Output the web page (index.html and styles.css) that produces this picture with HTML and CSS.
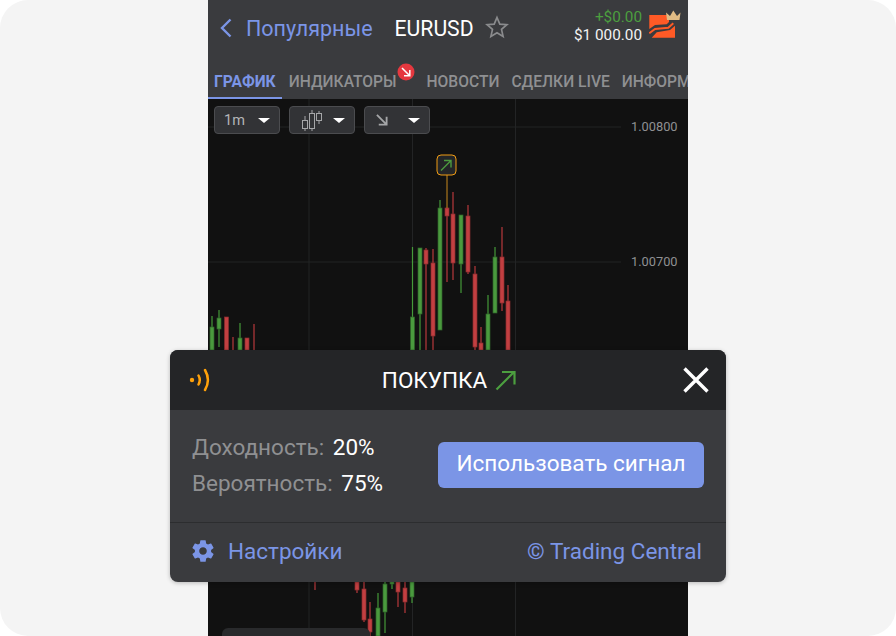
FILE: index.html
```html
<!DOCTYPE html>
<html lang="en">
<head>
    <meta charset="UTF-8">
    <title>EURUSD</title>
    <link rel="stylesheet" href="styles.css">
</head>
<body>
<div class="page">
    <div class="phone">
        <div class="topbar">
            <svg class="back" width="12" height="20" viewBox="0 0 12 20"><path d="M10.500 1.500 2 10l8.500 8.500" fill="none" stroke="#7b95e6" stroke-width="2.400"/></svg>
            <span class="back-text">Популярные</span>
            <span class="symbol">EURUSD</span>
            <svg class="star" width="24" height="24" viewBox="0 0 24 24"><path d="M12 2.500l2.800 6.600 7.100.6-5.400 4.700 1.600 7-6.100-3.700-6.100 3.700 1.600-7L2.100 9.700l7.100-.6z" fill="none" stroke="#8a8b8d" stroke-width="1.700"/></svg>
            <div class="balance">
                <div class="profit">+$0.00</div>
                <div class="amount">$1 000.00</div>
            </div>
            <svg class="logo" width="32" height="29" viewBox="0 0 32 29">
                <path d="M.3 5H20v7l-2.300 2.300L6 15 .3 19z" fill="#ff5a26"/>
                <path d="M.3 23.300 6 19l13.300-1.300 5-4.400" fill="none" stroke="#ff5a26" stroke-width="2"/>
                <path d="M2.700 27.700 7.700 22.300 21 20l5-4.300v12z" fill="#ff5a26"/>
                <path d="M18 10 17 2.500l4 3.500L24.300.5 28 6l3.500-3.500-1 7.500z" fill="#e0bb84"/>
            </svg>
        </div>
        <div class="tabs">
            <div class="tab tab-active">ГРАФИК</div>
            <div class="tab">ИНДИКАТОРЫ</div>
            <div class="tab tab-news">НОВОСТИ</div>
            <div class="tab">СДЕЛКИ LIVE</div>
            <div class="tab">ИНФОРМ</div>
            <svg class="badge" width="18" height="18" viewBox="0 0 18 18"><circle cx="9" cy="9" r="8.500" fill="#e5383f"/><path d="M5 5l7.500 7.500M7 12.800h5.800V7" fill="none" stroke="#fff" stroke-width="1.500"/></svg>
        </div>
        <div class="chart">
            <svg class="chart-svg" width="480" height="537" viewBox="208 99 480 537">
                <g class="grid">
                    <path d="M208 127H621M208 262H621M309 99V636M412.500 99V636M515.500 99V636"/>
                </g>
                <text class="price" x="631" y="131">1.00800</text>
                <text class="price" x="631" y="266">1.00700</text>
                <g class="up">
                    <line x1="212" y1="316" x2="212" y2="350"/><rect x="210" y="327" width="4" height="23"/>
                    <line x1="219" y1="310" x2="219" y2="347"/><rect x="217" y="318" width="4" height="11"/>
                    <line x1="240" y1="323" x2="240" y2="350"/><rect x="238" y="338" width="4" height="12"/>
                    <line x1="412.500" y1="247" x2="412.500" y2="350"/><rect x="410.500" y="317" width="4" height="33"/>
                    <line x1="420" y1="248" x2="420" y2="350"/><rect x="418" y="248" width="4" height="66"/>
                    <line x1="440" y1="200" x2="440" y2="330"/><rect x="438" y="208" width="4" height="122"/>
                    <line x1="461" y1="215" x2="461" y2="293"/><rect x="459" y="215" width="4" height="49"/>
                    <line x1="488" y1="295" x2="488" y2="350"/><rect x="486" y="314" width="4" height="36"/>
                    <line x1="495" y1="247" x2="495" y2="313"/><rect x="493" y="257" width="4" height="56"/>
                    <line x1="378" y1="593" x2="378" y2="636"/><rect x="376" y="608" width="4" height="28"/>
                    <line x1="385" y1="582" x2="385" y2="633"/><rect x="383" y="584" width="4" height="28"/>
                    <line x1="392" y1="582" x2="392" y2="589"/><rect x="390" y="582" width="4" height="2"/>
                    <line x1="412" y1="582" x2="412" y2="603"/><rect x="410" y="582" width="4" height="15"/>
                </g>
                <g class="down">
                    <rect x="224.500" y="317" width="4" height="33"/>
                    <line x1="233" y1="337" x2="233" y2="350"/>
                    <rect x="245" y="338" width="4" height="12"/>
                    <line x1="254" y1="324" x2="254" y2="350"/>
                    <line x1="426" y1="248" x2="426" y2="350"/><rect x="424" y="250" width="4" height="14"/>
                    <line x1="433" y1="249" x2="433" y2="350"/><rect x="431" y="263" width="4" height="73"/>
                    <line x1="447" y1="208" x2="447" y2="282"/><rect x="445" y="208" width="4" height="8"/>
                    <line x1="453" y1="192" x2="453" y2="280"/><rect x="451" y="214" width="4" height="49"/>
                    <line x1="468" y1="205" x2="468" y2="274"/><rect x="466" y="216" width="4" height="56"/>
                    <line x1="475" y1="266" x2="475" y2="350"/><rect x="473" y="274" width="4" height="73"/>
                    <line x1="481" y1="327" x2="481" y2="350"/><rect x="479" y="343" width="4" height="7"/>
                    <line x1="502" y1="227" x2="502" y2="311"/><rect x="500" y="257" width="4" height="46"/>
                    <line x1="508" y1="285" x2="508" y2="350"/><rect x="506" y="301" width="4" height="49"/>
                    <line x1="315" y1="582" x2="315" y2="590"/>
                    <line x1="357" y1="582" x2="357" y2="593"/><rect x="355" y="582" width="4" height="8"/>
                    <line x1="364" y1="582" x2="364" y2="622"/><rect x="362" y="589" width="4" height="31"/>
                    <line x1="370" y1="602" x2="370" y2="636"/><rect x="368" y="619" width="4" height="13"/>
                    <line x1="398" y1="582" x2="398" y2="607"/><rect x="396" y="582" width="4" height="10"/>
                    <line x1="405" y1="582" x2="405" y2="613"/><rect x="403" y="588" width="4" height="14"/>
                </g>
                <line class="signal-line" x1="447" y1="175" x2="447" y2="208"/>
                <rect class="signal-box" x="437" y="155" width="19" height="20" rx="4"/>
                <path d="M441 170.500l10-10M444 160.500h7v7" fill="none" stroke="#4c9a3f" stroke-width="1.400"/>
            </svg>
            <div class="toolbar">
                <div class="tool">
                    <span class="tool-label">1m</span>
                    <span class="caret"></span>
                </div>
                <div class="tool">
                    <svg class="tool-candles" width="20" height="21" viewBox="0 0 20 21" fill="none" stroke="#a5a6a8" stroke-width="1">
                        <path d="M3 6v15M10 0v21M17 1v13"/>
                        <rect x="0.500" y="10.500" width="5" height="8" fill="#323336"/>
                        <rect x="7.500" y="3.500" width="5" height="15" fill="#323336"/>
                        <rect x="14.500" y="3.500" width="5" height="7" fill="#323336"/>
                    </svg>
                    <span class="caret"></span>
                </div>
                <div class="tool">
                    <svg class="tool-arrow" width="12" height="12" viewBox="0 0 13 13" fill="none" stroke="#a5a6a8" stroke-width="2"><path d="M1 1l10 10M3 11.500h8.500V3"/></svg>
                    <span class="caret"></span>
                </div>
            </div>
            <div class="stub"></div>
        </div>
    </div>

    <div class="signal">
        <div class="signal-head">
            <svg class="wave" width="22" height="24" viewBox="0 0 22 24" fill="none" stroke="#ffa10a" stroke-width="2.500" stroke-linecap="round">
                <circle cx="3" cy="12" r="2.200" fill="#ffa10a" stroke="none"/>
                <path d="M9.500 7.500c1.700 3 1.700 6 0 9"/>
                <path d="M16 2c3.800 6.500 3.800 13.500 0 20"/>
            </svg>
            <div class="signal-title">ПОКУПКА
                <svg width="21" height="21" viewBox="0 0 21 21" fill="none" stroke="#4c9f3f" stroke-width="2.200"><path d="M1.500 19.500 19 2M7 2h12.500v12.500"/></svg>
            </div>
            <svg class="close" width="28" height="28" viewBox="0 0 28 28"><path d="M2.500 2.500l23 23M25.500 2.500l-23 23" stroke="#fff" stroke-width="3.400"/></svg>
        </div>
        <div class="signal-body">
            <div class="stats">
                <div class="stat"><span class="stat-name">Доходность:</span> 20%</div>
                <div class="stat"><span class="stat-name">Вероятность:</span> 75%</div>
            </div>
            <div class="use-btn">Использовать сигнал</div>
        </div>
        <div class="signal-foot">
            <div class="settings">
                <svg width="26" height="26" viewBox="0 0 24 24"><path fill="#7b95e6" d="M19.430 12.980c.04-.32.07-.64.07-.98s-.03-.66-.07-.98l2.110-1.650c.19-.15.240-.42.120-.64l-2-3.460c-.12-.22-.39-.3-.61-.22l-2.490 1c-.52-.4-1.080-.73-1.690-.98l-.38-2.650A.488.488 0 0 0 14 2h-4c-.25 0-.46.180-.49.420l-.38 2.650c-.61.25-1.170.59-1.690.98l-2.490-1c-.23-.09-.49 0-.61.220l-2 3.460c-.13.220-.07.490.12.640l2.110 1.650c-.04.320-.07.650-.07.980s.03.660.07.980l-2.110 1.650c-.19.150-.24.420-.12.640l2 3.460c.12.220.39.300.61.220l2.490-1c.52.400 1.080.730 1.690.980l.38 2.650c.03.240.24.420.49.420h4c.25 0 .46-.18.49-.42l.38-2.650c.61-.25 1.170-.59 1.690-.98l2.490 1c.23.090.49 0 .61-.22l2-3.460c.12-.22.07-.49-.12-.64l-2.110-1.650zM12 15.500c-1.930 0-3.500-1.570-3.500-3.500s1.570-3.500 3.500-3.500 3.500 1.570 3.500 3.500-1.570 3.500-3.500 3.500z"/></svg>
                <span>Настройки</span>
            </div>
            <div class="credit">© Trading Central</div>
        </div>
    </div>
</div>
</body>
</html>
```

FILE: styles.css
```css
html, body {
    margin: 0;
    padding: 0;
    background-color: #fff;
    font-family: Roboto, "Liberation Sans", sans-serif;
}

.page {
    position: relative;
    width: 896px;
    height: 636px;
    background-color: #f4f4f4;
    border-radius: 28px;
    overflow: hidden;
    display: flex;
    justify-content: center;
}

.phone {
    width: 480px;
    height: 636px;
    display: flex;
    flex-direction: column;
    background-color: #111;
}

.topbar {
    height: 60px;
    flex: none;
    display: flex;
    align-items: center;
    padding-left: 12px;
    background-color: #3a3b3e;
    box-sizing: border-box;
}

.back {
    margin-right: 14px;
    margin-top: -5px;
}

.back-text {
    color: #7b95e6;
    font-size: 21.500px;
    margin-right: 22px;
    margin-top: -3px;
}

.symbol {
    color: #fff;
    font-size: 21.200px;
    margin-right: 11px;
    margin-top: -3px;
}

.star {
    margin-top: -6px;
}

.balance {
    margin-left: auto;
    margin-right: 7px;
    text-align: right;
    font-size: 15.300px;
    line-height: 18px;
    margin-top: -9px;
}

.profit {
    color: #4c9f3f;
}

.amount {
    color: #f2f2f2;
}

.logo {
    margin-right: 7px;
    margin-top: -11px;
}

.tabs {
    height: 39px;
    flex: none;
    display: flex;
    align-items: flex-start;
    background-color: #3a3b3e;
    overflow: hidden;
    position: relative;
    white-space: nowrap;
}

.tab {
    height: 37px;
    padding: 12px 6px 0;
    box-sizing: border-box;
    color: #8f9092;
    font-size: 15.600px;
    font-weight: 500;
    line-height: 20px;
    border-bottom: 2px solid transparent;
    flex: none;
}

.tab-active {
    height: 39px;
    color: #7b95e6;
    border-bottom-color: #7b95e6;
    font-weight: 700;
    margin-right: 1px;
}

.tab-news {
    margin-left: 18px;
}

.badge {
    position: absolute;
    left: 189px;
    top: 3px;
}

.chart {
    flex: 1;
    position: relative;
    overflow: hidden;
}

.chart-svg {
    display: block;
}

.grid path {
    fill: none;
    stroke: #232425;
    stroke-width: 1;
}

.price {
    fill: #8f9092;
    font-size: 12.800px;
}

.up line {
    stroke: #459a3a;
    stroke-width: 1.200;
}

.up rect {
    fill: #4a9a3e;
    stroke: #2e6328;
    stroke-width: 0.700;
}

.down line {
    stroke: #b93a3d;
    stroke-width: 1.200;
}

.down rect {
    fill: #c23f41;
    stroke: #8a2d2e;
    stroke-width: 0.700;
}

.signal-line {
    stroke: #c98a1e;
    stroke-width: 1;
}

.signal-box {
    fill: #232527;
    stroke: #f09c14;
    stroke-width: 1;
}

.toolbar {
    position: absolute;
    left: 6px;
    top: 7px;
    display: flex;
    gap: 9px;
}

.tool {
    width: 66px;
    height: 28px;
    box-sizing: border-box;
    display: flex;
    align-items: center;
    padding: 0 9px;
    background-color: #323336;
    border: 1px solid #4b4c4f;
    border-radius: 4px;
}

.tool-label {
    color: #b4b5b7;
    font-size: 14.500px;
}

.tool-candles {
    margin-left: 3px;
}

.tool-arrow {
    margin-left: 2px;
}

.caret {
    width: 0;
    height: 0;
    margin-left: auto;
    border-left: 6px solid transparent;
    border-right: 6px solid transparent;
    border-top: 5px solid #fff;
}

.stub {
    position: absolute;
    left: 14px;
    top: 529px;
    width: 148px;
    height: 20px;
    background-color: #292a2c;
    border-radius: 6px 6px 0 0;
}

.signal {
    position: absolute;
    left: 170px;
    top: 350px;
    width: 556px;
    height: 232px;
    display: flex;
    flex-direction: column;
    background-color: #3a3b3e;
    border-radius: 8px;
    overflow: hidden;
    box-shadow: 0 1px 4px rgba(0, 0, 0, 0.25);
}

.signal-head {
    height: 60px;
    flex: none;
    display: flex;
    align-items: center;
    justify-content: space-between;
    padding: 0 16px 0 19px;
    background-color: #242527;
}

.signal-title {
    display: flex;
    align-items: center;
    gap: 8px;
    margin-left: 5px;
    color: #fff;
    font-size: 22.500px;
}

.signal-body {
    height: 113px;
    flex: none;
    display: flex;
    align-items: center;
    justify-content: space-between;
    padding: 0 22px 0 22px;
    box-sizing: border-box;
    border-bottom: 1px solid #2c2d2f;
}

.stats {
    display: flex;
    flex-direction: column;
    gap: 8px;
    margin-top: -2px;
}

.stat {
    color: #fff;
    font-size: 22.500px;
    line-height: 28px;
}

.stat-name {
    color: #8f9092;
    margin-right: 3px;
}

.use-btn {
    width: 266px;
    height: 46px;
    padding-bottom: 3px;
    box-sizing: border-box;
    margin-top: -3px;
    display: flex;
    align-items: center;
    justify-content: center;
    background-color: #7b95e6;
    border-radius: 6px;
    color: #fff;
    font-size: 22.500px;
}

.signal-foot {
    flex: 1;
    display: flex;
    align-items: center;
    justify-content: space-between;
    padding: 0 24px 3px 20px;
    color: #7b95e6;
    font-size: 22.500px;
}

.settings {
    display: flex;
    align-items: center;
    gap: 12px;
}
```
